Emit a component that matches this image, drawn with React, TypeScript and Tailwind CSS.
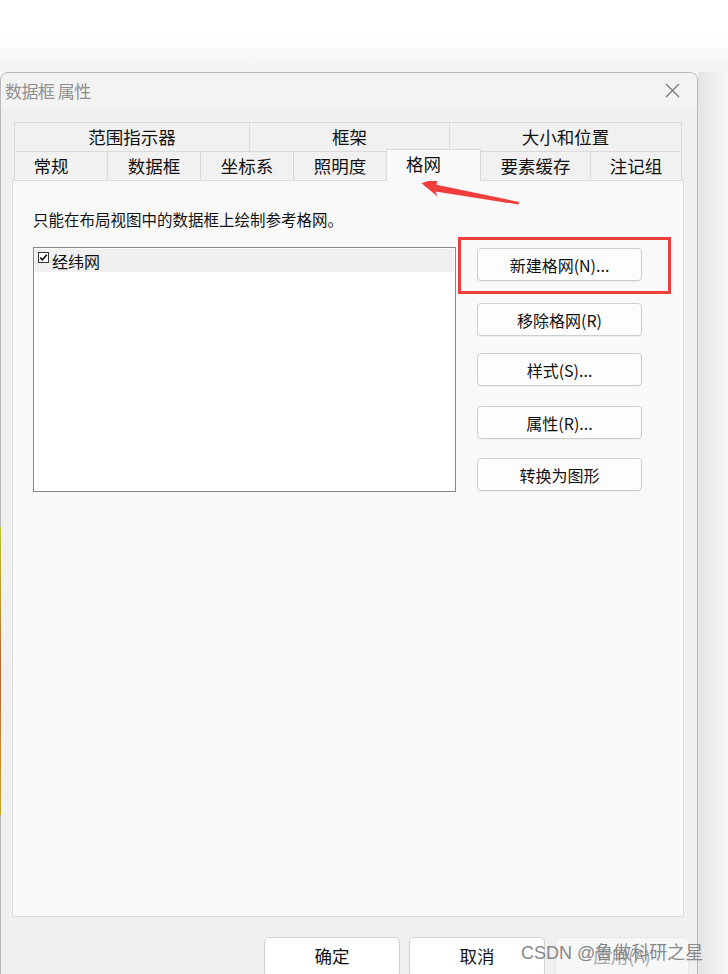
import React from "react";

const FONT = { fontFamily: '"Noto Sans CJK SC", "Microsoft YaHei", "Noto Sans", sans-serif' };

function Tab({ w, label, last, shift }: { w: number; label: string; last?: boolean; shift?: string }) {
  return (
    <div
      className={`h-full flex items-center justify-center border-t border-l border-[#dadada] bg-[#f1f1f1] text-[17.5px] text-[#111] ${last ? "border-r" : ""} ${shift ?? ""}`}
      style={{ width: w }}
    >
      {label}
    </div>
  );
}

function SideButton({ label, mt }: { label: string; mt: string }) {
  return (
    <div
      className={`${mt} w-[165px] h-[33px] rounded-[4px] border border-[#cdcdcd] bg-[#fdfdfd] flex items-center justify-center text-[16px] text-[#111] shadow-[0_1px_0_rgba(0,0,0,0.04)]`}
    >
      {label}
    </div>
  );
}

export default function App() {
  return (
    <div className="relative w-[728px] h-[974px] overflow-hidden bg-white" style={FONT}>
      <div className="h-[72px] bg-gradient-to-b from-white via-white to-[#f3f3f3]" />
      <div className="flex h-[902px]">
        {/* dialog */}
        <div className="w-[698px] h-full flex flex-col border-t border-l border-r border-[#b9b9b9] rounded-t-[8px] bg-[#f0f0f0] overflow-hidden">
          {/* title bar */}
          <div className="h-[35px] shrink-0 bg-[#f3f3f3] flex items-center justify-between pl-[4px] pr-[17px]">
            <span className="text-[17px] text-[#8f8f8f] tracking-[-0.5px]">数据框 属性</span>
            <svg width="15" height="15" viewBox="0 0 15 15">
              <path d="M1 1 L14 14 M14 1 L1 14" stroke="#7a7a7a" strokeWidth="1.3" fill="none" />
            </svg>
          </div>

          {/* body */}
          <div className="flex-1 flex flex-col pl-[11px] pt-[14px]">
            {/* tabs row 1 */}
            <div className="ml-[2px] h-[29px] flex">
              <Tab w={235} label="范围指示器" />
              <Tab w={200} label="框架" />
              <Tab w={233} label="大小和位置" last />
            </div>
            {/* tabs row 2 */}
            <div className="ml-[2px] h-[29px] flex items-end">
              <Tab w={93} label="常规" shift="pr-[20px]" />
              <Tab w={93} label="数据框" />
              <Tab w={93} label="坐标系" />
              <Tab w={93} label="照明度" />
              <div className="relative z-10 w-[95px] h-[32px] mb-[-1px] border-t border-l border-r border-[#dadada] bg-[#f9f9f9] flex items-start justify-center pt-[1px] pr-[20px] text-[17.5px] text-[#111]">
                格网
              </div>
              <div className="h-full flex items-center justify-center border-t border-[#dadada] bg-[#f1f1f1] text-[17.5px] text-[#111] w-[109px]">
                要素缓存
              </div>
              <Tab w={92} label="注记组" last />
            </div>

            {/* panel */}
            <div className="w-[672px] h-[737px] border border-[#dcdcdc] bg-[#f9f9f9] pl-[20px] pt-[27px]">
              <div className="text-[15.5px] leading-[22px] text-[#111]">只能在布局视图中的数据框上绘制参考格网。</div>
              <div className="flex mt-[17px]">
                <div className="w-[423px] h-[245px] border border-[#828790] bg-white p-[1px]">
                  <div className="h-[23px] bg-[#f0f0f0] flex items-center pl-[3px] gap-[3px]">
                    <svg width="11" height="11" viewBox="0 0 11 11" className="-mt-[6px]">
                      <rect x="0.5" y="0.5" width="10" height="10" fill="white" stroke="#333" />
                      <path d="M2.2 5.6 L4.4 7.8 L8.8 2.8" stroke="#111" strokeWidth="1.6" fill="none" />
                    </svg>
                    <span className="text-[16px] text-[#111] leading-[20px]">经纬网</span>
                  </div>
                </div>
                <div className="ml-[21px] flex flex-col">
                  <SideButton label="新建格网(N)..." mt="mt-[1px]" />
                  <SideButton label="移除格网(R)" mt="mt-[22px]" />
                  <SideButton label="样式(S)..." mt="mt-[17px]" />
                  <SideButton label="属性(R)..." mt="mt-[20px]" />
                  <SideButton label="转换为图形" mt="mt-[19px]" />
                </div>
              </div>
            </div>

            {/* bottom buttons */}
            <div className="flex mt-[20px] pl-[252px] gap-[9px]">
              <div className="w-[136px] h-[40px] rounded-[5px] border border-[#d0d0d0] bg-white flex justify-center pt-[5px] text-[17.5px] text-[#111]">
                确定
              </div>
              <div className="w-[136px] h-[40px] rounded-[5px] border border-[#d0d0d0] bg-white flex justify-center pt-[5px] text-[17.5px] text-[#111]">
                取消
              </div>
              <div className="ml-[1px] w-[134px] h-[40px] rounded-[5px] border border-[#e6e6e6] bg-[#f7f7f7] flex justify-center pt-[5px] text-[17.5px] text-[#a6a6a6]">
                应用(A)
              </div>
            </div>
          </div>
        </div>
        {/* shadow area on the right */}
        <div className="flex-1 h-full bg-gradient-to-r from-[#e4e4e4] via-[#efefef] to-[#f6f6f6]" />
      </div>

      {/* background app leaking at left edge */}
      <div className="absolute left-0 top-[527px] w-[1px] h-[288px] bg-gradient-to-b from-[#b5c22a] via-[#b5662e] to-[#c9a326]" />

      {/* red highlight box */}
      <div className="absolute left-[458px] top-[237px] w-[213px] h-[57px] border-[3px] border-[#f23d3d]" />

      {/* red arrow */}
      <svg className="absolute left-0 top-0" width="728" height="974" viewBox="0 0 728 974" style={{ pointerEvents: "none" }}>
        <polygon
          points="421.5,183.3 438,177.5 436.5,184.8 519,202 518.5,204.5 435.5,191.5 437.5,196.5"
          fill="#f23d3d"
        />
      </svg>

      {/* watermark */}
      <div
        className="absolute left-[521px] top-[941px] text-[18px] leading-[24px] text-[#7d7d7d] opacity-90 whitespace-nowrap"
        style={{ fontFamily: '"Liberation Sans", "Noto Sans CJK SC", sans-serif' }}
      >
        CSDN @鲁做科研之星
      </div>
    </div>
  );
}
